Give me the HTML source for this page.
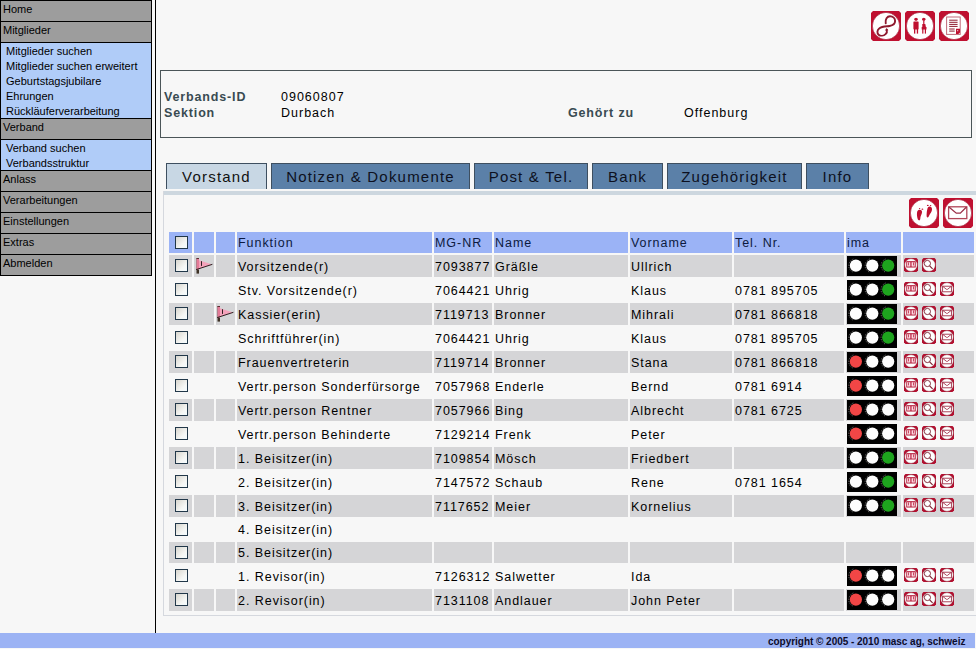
<!DOCTYPE html>
<html><head><meta charset="utf-8"><style>
html,body{margin:0;padding:0}
body{width:976px;height:649px;overflow:hidden;position:relative;background:#f7f7f7;font-family:"Liberation Sans", sans-serif;}
.abs{position:absolute}
.menu{position:absolute;left:0;top:0;width:152px;height:276px;background:#000}
.mg{position:absolute;left:1px;width:150px;height:20px;background:#9d9d9d;font-size:11px;color:#000;}
.mg span{position:absolute;left:2px;top:2px;}
.msub{position:absolute;left:1px;width:150px;background:#b0ccf8;padding-top:1px;box-sizing:border-box}
.ms{height:15px;line-height:15px;font-size:11px;padding-left:5px;color:#000;white-space:nowrap}
.mb{position:absolute;left:0;width:150px;height:1px;background:#000}
.vline{position:absolute;left:155px;top:0;width:1px;height:633px;background:#000}
.info{position:absolute;left:160px;top:70px;width:810px;height:66px;border:1px solid #4b5558;}
.lab{position:absolute;font-weight:bold;color:#394b52;font-size:12.5px;letter-spacing:0.85px}
.val{position:absolute;color:#000;font-size:12.5px;letter-spacing:1.0px}
.tab{position:absolute;top:163px;height:25px;border:1px solid #3e4f60;border-bottom:none;background:#5b80a8;color:#0d1020;font-size:15px;line-height:26px;text-align:center;letter-spacing:1.2px;white-space:nowrap}
.tab.act{background:#c8d7e4;color:#111}
.band{position:absolute;left:163px;top:191px;width:813px;height:4px;background:#cdd7df}
.pleft{position:absolute;left:163px;top:191px;width:1px;height:425px;background:#d5d8de}
.pbot{position:absolute;left:163px;top:615px;width:813px;height:1px;background:#d5d8de}
.c{position:absolute;overflow:hidden}
.t{position:absolute;left:1px;top:5px;font-size:12.5px;letter-spacing:0.95px;color:#000;white-space:nowrap}
.t.th{top:4px;color:#0c1a40}
.footer{position:absolute;left:0;top:633px;width:975px;height:15px;background:#9cb3f4}
.footer span{position:absolute;left:768px;top:3px;font-size:10px;font-weight:bold;color:#0c0c2c;letter-spacing:-0.03px;white-space:nowrap}
</style></head><body>
<div class="menu">
<div class="mg" style="top:1px"><span>Home</span></div>
<div class="mb" style="top:21px"></div>
<div class="mg" style="top:22px"><span>Mitglieder</span></div>
<div class="mb" style="top:42px"></div>
<div class="msub" style="top:43px;height:75px"><div class="ms">Mitglieder suchen</div><div class="ms">Mitglieder suchen erweitert</div><div class="ms">Geburtstagsjubilare</div><div class="ms">Ehrungen</div><div class="ms">Rückläuferverarbeitung</div></div>
<div class="mb" style="top:118px"></div>
<div class="mg" style="top:119px"><span>Verband</span></div>
<div class="mb" style="top:139px"></div>
<div class="msub" style="top:140px;height:30px"><div class="ms">Verband suchen</div><div class="ms">Verbandsstruktur</div></div>
<div class="mb" style="top:170px"></div>
<div class="mg" style="top:171px"><span>Anlass</span></div>
<div class="mb" style="top:191px"></div>
<div class="mg" style="top:192px"><span>Verarbeitungen</span></div>
<div class="mb" style="top:212px"></div>
<div class="mg" style="top:213px"><span>Einstellungen</span></div>
<div class="mb" style="top:233px"></div>
<div class="mg" style="top:234px"><span>Extras</span></div>
<div class="mb" style="top:254px"></div>
<div class="mg" style="top:255px"><span>Abmelden</span></div>
<div class="mb" style="top:275px"></div>
</div>
<div class="vline"></div>
<div class="abs" style="left:871px;top:11px"><svg width="30" height="30" viewBox="0 0 30 30" style="display:block"><path d="M2 0H28L30 2V28L28 30H2L0 28V2Z" fill="#bf1030"/><circle cx="15" cy="15" r="13.6" fill="#fff" stroke="#a01830" stroke-width="0.6"/><path d="M14.7 12.3C14 8.2 16.2 5.3 19 5.3C22 5.3 24.1 7.6 24.1 10.1C24.1 13.3 21.2 14.6 18.6 15C15 15.5 11 15.4 8.2 17.4C6 19 5.9 22.3 7.6 23.7C9.5 25.2 12.6 24.9 14.6 23.1C15.9 21.9 16.2 20.5 15.8 18.9" fill="none" stroke="#8e1a2e" stroke-width="1.9" stroke-linecap="round"/><path d="M13.9 19.6L15.6 16.9L17.4 19.3Z" fill="#8e1a2e"/></svg></div>
<div class="abs" style="left:905px;top:11px"><svg width="30" height="30" viewBox="0 0 30 30" style="display:block"><path d="M2 0H28L30 2V28L28 30H2L0 28V2Z" fill="#bf1030"/><circle cx="15" cy="15" r="13.6" fill="#fff" stroke="#a01830" stroke-width="0.6"/><g fill="#bf1030"><path d="M9.3 7.6h3.4l-.5 1.6h-2.4z"/><circle cx="11" cy="8.2" r="1.5"/><rect x="8.4" y="10.4" width="5.2" height="8" rx="0.6"/><rect x="9" y="18" width="1.3" height="4.6"/><rect x="11.8" y="18" width="1.3" height="4.6"/><path d="M17.1 7.6h3.4l-.5 1.6h-2.4z"/><circle cx="18.8" cy="8.2" r="1.5"/><rect x="18.2" y="9.5" width="1.2" height="4"/><path d="M17.3 13h3l.6 3h.6v2.4h-4.8v-2.4h.6z"/><rect x="17.2" y="18" width="1.2" height="4.6"/><rect x="19.8" y="18" width="1.2" height="4.6"/></g></svg></div>
<div class="abs" style="left:939px;top:11px"><svg width="30" height="30" viewBox="0 0 30 30" style="display:block"><path d="M2 0H28L30 2V28L28 30H2L0 28V2Z" fill="#bf1030"/><circle cx="15" cy="15" r="13.6" fill="#fff" stroke="#a01830" stroke-width="0.6"/><rect x="7.6" y="6" width="13.6" height="17.4" fill="#fff" stroke="#c06a7a" stroke-width="1"/><g stroke="#8e1a2e" stroke-width="1"><line x1="10.2" y1="9.2" x2="18.6" y2="9.2"/><line x1="10.2" y1="11.3" x2="18.6" y2="11.3"/><line x1="10.2" y1="13.4" x2="18.6" y2="13.4"/><line x1="10.2" y1="15.4" x2="18.6" y2="15.4"/><line x1="10.2" y1="18" x2="15.7" y2="18"/><line x1="10.2" y1="20.1" x2="15.7" y2="20.1"/></g><path d="M17 17.8h4v3.6l-1.6 1.6h-2.4z" fill="#bf1030"/><rect x="18.2" y="19.2" width="1" height="1" fill="#fff"/></svg></div>
<div class="info"></div>
<div class="lab" style="left:164px;top:90px">Verbands-ID</div>
<div class="lab" style="left:164px;top:106px">Sektion</div>
<div class="val" style="left:281px;top:90px">09060807</div>
<div class="val" style="left:281px;top:106px">Durbach</div>
<div class="lab" style="left:568px;top:106px">Gehört zu</div>
<div class="val" style="left:684px;top:106px">Offenburg</div>
<div class="tab act" style="left:166px;width:99px">Vorstand</div><div class="tab" style="left:271px;width:197px">Notizen &amp; Dokumente</div><div class="tab" style="left:474px;width:112px">Post &amp; Tel.</div><div class="tab" style="left:592px;width:69px">Bank</div><div class="tab" style="left:667px;width:133px">Zugehörigkeit</div><div class="tab" style="left:806px;width:61px">Info</div>
<div class="band"></div>
<div class="pleft"></div>
<div class="pbot"></div>
<div class="abs" style="left:909px;top:198px"><svg width="30" height="30" viewBox="0 0 30 30" style="display:block"><path d="M2 0H28L30 2V28L28 30H2L0 28V2Z" fill="#bf1030"/><circle cx="15" cy="15" r="13.6" fill="#fff" stroke="#a01830" stroke-width="0.6"/><g fill="#bf1030"><path d="M10.2 11.8C12 11.4 13.2 12.6 13 14.4C12.8 16.2 11.6 17.6 11.4 19.6C11.3 21 11.2 22.4 10.2 22.4C9 22.4 8.6 21 8.3 19.6C7.9 17.4 7.8 15.6 8.2 13.8C8.5 12.6 9.2 12 10.2 11.8Z"/><path d="M20.6 8.5C22.4 8.6 23.2 10 23 11.8C22.8 13.8 21.2 15.6 20.2 17.4C19.6 18.6 19.3 19.6 18.4 19.4C17.6 19.2 17.6 18 17.6 16.8C17.6 14.8 17.9 12.6 18.4 10.8C18.8 9.4 19.6 8.5 20.6 8.5Z"/><ellipse cx="10.6" cy="10.6" rx=".7" ry=".5"/><ellipse cx="13.4" cy="11.2" rx=".9" ry=".6"/><ellipse cx="18.8" cy="7.4" rx=".9" ry=".6"/><ellipse cx="21.6" cy="7.6" rx=".7" ry=".5"/></g></svg></div>
<div class="abs" style="left:943px;top:198px"><svg width="30" height="30" viewBox="0 0 30 30" style="display:block"><path d="M2 0H28L30 2V28L28 30H2L0 28V2Z" fill="#bf1030"/><circle cx="15" cy="15" r="13.6" fill="#fff" stroke="#a01830" stroke-width="0.6"/><rect x="5.6" y="8.8" width="18.2" height="11.8" fill="#fff" stroke="#b04558" stroke-width="1.3"/><path d="M5.9 9L13.3 15.2H17.3L23.5 9" fill="none" stroke="#9a3048" stroke-width="1.3"/></svg></div>
<div class="c" style="left:169px;top:232px;width:23px;height:21px;background:#9bb3f6;"><div style="position:absolute;left:6px;top:4px"><svg width="13" height="13" viewBox="0 0 13 13" style="display:block"><defs><linearGradient id="cg" x1="0" y1="0" x2="1" y2="1"><stop offset="0" stop-color="#d6d4cc"/><stop offset="0.65" stop-color="#f6f7f5"/><stop offset="1" stop-color="#f2fcff"/></linearGradient></defs><rect x="0.5" y="0.5" width="12" height="12" fill="url(#cg)" stroke="#22384a" stroke-width="1"/></svg></div></div>
<div class="c" style="left:194px;top:232px;width:20px;height:21px;background:#9bb3f6;"></div>
<div class="c" style="left:216px;top:232px;width:19px;height:21px;background:#9bb3f6;"></div>
<div class="c" style="left:237px;top:232px;width:195px;height:21px;background:#9bb3f6;"><span class="t th">Funktion</span></div>
<div class="c" style="left:434px;top:232px;width:58px;height:21px;background:#9bb3f6;"><span class="t th">MG-NR</span></div>
<div class="c" style="left:494px;top:232px;width:134px;height:21px;background:#9bb3f6;"><span class="t th">Name</span></div>
<div class="c" style="left:630px;top:232px;width:102px;height:21px;background:#9bb3f6;"><span class="t th">Vorname</span></div>
<div class="c" style="left:734px;top:232px;width:110px;height:21px;background:#9bb3f6;"><span class="t th">Tel. Nr.</span></div>
<div class="c" style="left:846px;top:232px;width:55px;height:21px;background:#9bb3f6;"><span class="t th">ima</span></div>
<div class="c" style="left:903px;top:232px;width:71px;height:21px;background:#9bb3f6;"></div>
<div class="c" style="left:169px;top:255px;width:23px;height:22px;background:#d5d5d7;"><div style="position:absolute;left:6px;top:4px"><svg width="13" height="13" viewBox="0 0 13 13" style="display:block"><defs><linearGradient id="cg" x1="0" y1="0" x2="1" y2="1"><stop offset="0" stop-color="#d6d4cc"/><stop offset="0.65" stop-color="#f6f7f5"/><stop offset="1" stop-color="#f2fcff"/></linearGradient></defs><rect x="0.5" y="0.5" width="12" height="12" fill="url(#cg)" stroke="#22384a" stroke-width="1"/></svg></div></div>
<div class="c" style="left:194px;top:255px;width:20px;height:22px;background:#d5d5d7;"><div style="position:absolute;left:1px;top:3px"><svg width="18" height="17" viewBox="0 0 18 17" style="display:block"><rect x="1.5" y="0" width="2.5" height="15.6" fill="#3e3226"/><rect x="1.5" y="0.8" width="2.5" height="10.6" fill="#e47a98"/><path d="M4 2.2 L17.2 6.4 L1.5 11.4 L4 11.4 Z" fill="#f4a2ba"/><path d="M1.2 11.6 L17.4 6.3" stroke="#1a1010" stroke-width="0.9"/><rect x="6.1" y="3.2" width="0.9" height="4.7" fill="#1a1010"/><rect x="1.5" y="0" width="2.5" height="0.8" fill="#5a2a30"/></svg></div></div>
<div class="c" style="left:216px;top:255px;width:19px;height:22px;background:#d5d5d7;"></div>
<div class="c" style="left:237px;top:255px;width:195px;height:22px;background:#d5d5d7;"><span class="t">Vorsitzende(r)</span></div>
<div class="c" style="left:434px;top:255px;width:58px;height:22px;background:#d5d5d7;"><span class="t">7093877</span></div>
<div class="c" style="left:494px;top:255px;width:134px;height:22px;background:#d5d5d7;"><span class="t">Gräßle</span></div>
<div class="c" style="left:630px;top:255px;width:102px;height:22px;background:#d5d5d7;"><span class="t">Ullrich</span></div>
<div class="c" style="left:734px;top:255px;width:110px;height:22px;background:#d5d5d7;"></div>
<div class="c" style="left:846px;top:255px;width:55px;height:22px;background:#d5d5d7;"><div style="position:absolute;left:1px;top:1px"><svg width="50" height="20" viewBox="0 0 50 20" style="display:block"><rect width="50" height="20" fill="#000"/><circle cx="8.9" cy="9.6" r="6.1" fill="#fdfdfd"/><path d="M6.4 3.0 A7 7 0 0 0 6.4 16.2" fill="none" stroke="#9a9a9a" stroke-width="0.7" stroke-dasharray="1.2 1.3"/><circle cx="25.3" cy="9.6" r="6.1" fill="#fdfdfd"/><path d="M22.8 3.0 A7 7 0 0 0 22.8 16.2" fill="none" stroke="#9a9a9a" stroke-width="0.7" stroke-dasharray="1.2 1.3"/><circle cx="41.2" cy="9.6" r="6.1" fill="#1ea41e"/><path d="M38.7 3.0 A7 7 0 0 0 38.7 16.2" fill="none" stroke="#9a9a9a" stroke-width="0.7" stroke-dasharray="1.2 1.3"/></svg></div></div>
<div class="c" style="left:903px;top:255px;width:71px;height:22px;background:#d5d5d7;"><div style="position:absolute;left:1px;top:3px"><svg width="14" height="14" viewBox="0 0 14 14" style="display:block"><path d="M1.5 0H12.5L14 1.5V12.5L12.5 14H1.5L0 12.5V1.5Z" fill="#b21030"/><circle cx="7" cy="7" r="6.4" fill="#fff" stroke="#801828" stroke-width="0.5"/><rect x="2.3" y="3.2" width="9.4" height="6.3" fill="#b21030"/><g fill="#fbd8e0"><rect x="3.1" y="4.2" width="3.3" height="4.4"/><rect x="7.5" y="4.2" width="3.3" height="4.4"/></g><g fill="#b21030"><rect x="4.2" y="4.4" width=".7" height="3"/><rect x="9" y="4.4" width=".7" height="3"/></g></svg></div><div style="position:absolute;left:19px;top:3px"><svg width="14" height="14" viewBox="0 0 14 14" style="display:block"><path d="M1.5 0H12.5L14 1.5V12.5L12.5 14H1.5L0 12.5V1.5Z" fill="#b21030"/><circle cx="7" cy="7" r="6.4" fill="#fff" stroke="#801828" stroke-width="0.5"/><circle cx="5.4" cy="5.5" r="3.1" fill="none" stroke="#7a2030" stroke-width="0.9"/><line x1="7.6" y1="7.8" x2="10.6" y2="10.8" stroke="#7a2030" stroke-width="1.1"/></svg></div></div>
<div class="c" style="left:169px;top:279px;width:23px;height:22px;background:transparent;"><div style="position:absolute;left:6px;top:4px"><svg width="13" height="13" viewBox="0 0 13 13" style="display:block"><defs><linearGradient id="cg" x1="0" y1="0" x2="1" y2="1"><stop offset="0" stop-color="#d6d4cc"/><stop offset="0.65" stop-color="#f6f7f5"/><stop offset="1" stop-color="#f2fcff"/></linearGradient></defs><rect x="0.5" y="0.5" width="12" height="12" fill="url(#cg)" stroke="#22384a" stroke-width="1"/></svg></div></div>
<div class="c" style="left:194px;top:279px;width:20px;height:22px;background:transparent;"></div>
<div class="c" style="left:216px;top:279px;width:19px;height:22px;background:transparent;"></div>
<div class="c" style="left:237px;top:279px;width:195px;height:22px;background:transparent;"><span class="t">Stv. Vorsitzende(r)</span></div>
<div class="c" style="left:434px;top:279px;width:58px;height:22px;background:transparent;"><span class="t">7064421</span></div>
<div class="c" style="left:494px;top:279px;width:134px;height:22px;background:transparent;"><span class="t">Uhrig</span></div>
<div class="c" style="left:630px;top:279px;width:102px;height:22px;background:transparent;"><span class="t">Klaus</span></div>
<div class="c" style="left:734px;top:279px;width:110px;height:22px;background:transparent;"><span class="t">0781 895705</span></div>
<div class="c" style="left:846px;top:279px;width:55px;height:22px;background:transparent;"><div style="position:absolute;left:1px;top:1px"><svg width="50" height="20" viewBox="0 0 50 20" style="display:block"><rect width="50" height="20" fill="#000"/><circle cx="8.9" cy="9.6" r="6.1" fill="#fdfdfd"/><path d="M6.4 3.0 A7 7 0 0 0 6.4 16.2" fill="none" stroke="#9a9a9a" stroke-width="0.7" stroke-dasharray="1.2 1.3"/><circle cx="25.3" cy="9.6" r="6.1" fill="#fdfdfd"/><path d="M22.8 3.0 A7 7 0 0 0 22.8 16.2" fill="none" stroke="#9a9a9a" stroke-width="0.7" stroke-dasharray="1.2 1.3"/><circle cx="41.2" cy="9.6" r="6.1" fill="#1ea41e"/><path d="M38.7 3.0 A7 7 0 0 0 38.7 16.2" fill="none" stroke="#9a9a9a" stroke-width="0.7" stroke-dasharray="1.2 1.3"/></svg></div></div>
<div class="c" style="left:903px;top:279px;width:71px;height:22px;background:transparent;"><div style="position:absolute;left:1px;top:3px"><svg width="14" height="14" viewBox="0 0 14 14" style="display:block"><path d="M1.5 0H12.5L14 1.5V12.5L12.5 14H1.5L0 12.5V1.5Z" fill="#b21030"/><circle cx="7" cy="7" r="6.4" fill="#fff" stroke="#801828" stroke-width="0.5"/><rect x="2.3" y="3.2" width="9.4" height="6.3" fill="#b21030"/><g fill="#fbd8e0"><rect x="3.1" y="4.2" width="3.3" height="4.4"/><rect x="7.5" y="4.2" width="3.3" height="4.4"/></g><g fill="#b21030"><rect x="4.2" y="4.4" width=".7" height="3"/><rect x="9" y="4.4" width=".7" height="3"/></g></svg></div><div style="position:absolute;left:19px;top:3px"><svg width="14" height="14" viewBox="0 0 14 14" style="display:block"><path d="M1.5 0H12.5L14 1.5V12.5L12.5 14H1.5L0 12.5V1.5Z" fill="#b21030"/><circle cx="7" cy="7" r="6.4" fill="#fff" stroke="#801828" stroke-width="0.5"/><circle cx="5.4" cy="5.5" r="3.1" fill="none" stroke="#7a2030" stroke-width="0.9"/><line x1="7.6" y1="7.8" x2="10.6" y2="10.8" stroke="#7a2030" stroke-width="1.1"/></svg></div><div style="position:absolute;left:37px;top:3px"><svg width="14" height="14" viewBox="0 0 14 14" style="display:block"><path d="M1.5 0H12.5L14 1.5V12.5L12.5 14H1.5L0 12.5V1.5Z" fill="#b21030"/><circle cx="7" cy="7" r="6.4" fill="#fff" stroke="#801828" stroke-width="0.5"/><rect x="2.6" y="4.2" width="8.8" height="5.6" fill="none" stroke="#a03048" stroke-width=".9"/><path d="M2.8 4.4l3.6 2.9h1.2l3.6-2.9" fill="none" stroke="#a03048" stroke-width=".9"/></svg></div></div>
<div class="c" style="left:169px;top:303px;width:23px;height:22px;background:#d5d5d7;"><div style="position:absolute;left:6px;top:4px"><svg width="13" height="13" viewBox="0 0 13 13" style="display:block"><defs><linearGradient id="cg" x1="0" y1="0" x2="1" y2="1"><stop offset="0" stop-color="#d6d4cc"/><stop offset="0.65" stop-color="#f6f7f5"/><stop offset="1" stop-color="#f2fcff"/></linearGradient></defs><rect x="0.5" y="0.5" width="12" height="12" fill="url(#cg)" stroke="#22384a" stroke-width="1"/></svg></div></div>
<div class="c" style="left:194px;top:303px;width:20px;height:22px;background:#d5d5d7;"></div>
<div class="c" style="left:216px;top:303px;width:19px;height:22px;background:#d5d5d7;"><div style="position:absolute;left:0px;top:3px"><svg width="18" height="17" viewBox="0 0 18 17" style="display:block"><rect x="1.5" y="0" width="2.5" height="15.6" fill="#3e3226"/><rect x="1.5" y="0.8" width="2.5" height="10.6" fill="#e47a98"/><path d="M4 2.2 L17.2 6.4 L1.5 11.4 L4 11.4 Z" fill="#f4a2ba"/><path d="M1.2 11.6 L17.4 6.3" stroke="#1a1010" stroke-width="0.9"/><rect x="6.1" y="3.2" width="0.9" height="4.7" fill="#1a1010"/><rect x="1.5" y="0" width="2.5" height="0.8" fill="#5a2a30"/></svg></div></div>
<div class="c" style="left:237px;top:303px;width:195px;height:22px;background:#d5d5d7;"><span class="t">Kassier(erin)</span></div>
<div class="c" style="left:434px;top:303px;width:58px;height:22px;background:#d5d5d7;"><span class="t">7119713</span></div>
<div class="c" style="left:494px;top:303px;width:134px;height:22px;background:#d5d5d7;"><span class="t">Bronner</span></div>
<div class="c" style="left:630px;top:303px;width:102px;height:22px;background:#d5d5d7;"><span class="t">Mihrali</span></div>
<div class="c" style="left:734px;top:303px;width:110px;height:22px;background:#d5d5d7;"><span class="t">0781 866818</span></div>
<div class="c" style="left:846px;top:303px;width:55px;height:22px;background:#d5d5d7;"><div style="position:absolute;left:1px;top:1px"><svg width="50" height="20" viewBox="0 0 50 20" style="display:block"><rect width="50" height="20" fill="#000"/><circle cx="8.9" cy="9.6" r="6.1" fill="#fdfdfd"/><path d="M6.4 3.0 A7 7 0 0 0 6.4 16.2" fill="none" stroke="#9a9a9a" stroke-width="0.7" stroke-dasharray="1.2 1.3"/><circle cx="25.3" cy="9.6" r="6.1" fill="#fdfdfd"/><path d="M22.8 3.0 A7 7 0 0 0 22.8 16.2" fill="none" stroke="#9a9a9a" stroke-width="0.7" stroke-dasharray="1.2 1.3"/><circle cx="41.2" cy="9.6" r="6.1" fill="#1ea41e"/><path d="M38.7 3.0 A7 7 0 0 0 38.7 16.2" fill="none" stroke="#9a9a9a" stroke-width="0.7" stroke-dasharray="1.2 1.3"/></svg></div></div>
<div class="c" style="left:903px;top:303px;width:71px;height:22px;background:#d5d5d7;"><div style="position:absolute;left:1px;top:3px"><svg width="14" height="14" viewBox="0 0 14 14" style="display:block"><path d="M1.5 0H12.5L14 1.5V12.5L12.5 14H1.5L0 12.5V1.5Z" fill="#b21030"/><circle cx="7" cy="7" r="6.4" fill="#fff" stroke="#801828" stroke-width="0.5"/><rect x="2.3" y="3.2" width="9.4" height="6.3" fill="#b21030"/><g fill="#fbd8e0"><rect x="3.1" y="4.2" width="3.3" height="4.4"/><rect x="7.5" y="4.2" width="3.3" height="4.4"/></g><g fill="#b21030"><rect x="4.2" y="4.4" width=".7" height="3"/><rect x="9" y="4.4" width=".7" height="3"/></g></svg></div><div style="position:absolute;left:19px;top:3px"><svg width="14" height="14" viewBox="0 0 14 14" style="display:block"><path d="M1.5 0H12.5L14 1.5V12.5L12.5 14H1.5L0 12.5V1.5Z" fill="#b21030"/><circle cx="7" cy="7" r="6.4" fill="#fff" stroke="#801828" stroke-width="0.5"/><circle cx="5.4" cy="5.5" r="3.1" fill="none" stroke="#7a2030" stroke-width="0.9"/><line x1="7.6" y1="7.8" x2="10.6" y2="10.8" stroke="#7a2030" stroke-width="1.1"/></svg></div><div style="position:absolute;left:37px;top:3px"><svg width="14" height="14" viewBox="0 0 14 14" style="display:block"><path d="M1.5 0H12.5L14 1.5V12.5L12.5 14H1.5L0 12.5V1.5Z" fill="#b21030"/><circle cx="7" cy="7" r="6.4" fill="#fff" stroke="#801828" stroke-width="0.5"/><rect x="2.6" y="4.2" width="8.8" height="5.6" fill="none" stroke="#a03048" stroke-width=".9"/><path d="M2.8 4.4l3.6 2.9h1.2l3.6-2.9" fill="none" stroke="#a03048" stroke-width=".9"/></svg></div></div>
<div class="c" style="left:169px;top:327px;width:23px;height:22px;background:transparent;"><div style="position:absolute;left:6px;top:4px"><svg width="13" height="13" viewBox="0 0 13 13" style="display:block"><defs><linearGradient id="cg" x1="0" y1="0" x2="1" y2="1"><stop offset="0" stop-color="#d6d4cc"/><stop offset="0.65" stop-color="#f6f7f5"/><stop offset="1" stop-color="#f2fcff"/></linearGradient></defs><rect x="0.5" y="0.5" width="12" height="12" fill="url(#cg)" stroke="#22384a" stroke-width="1"/></svg></div></div>
<div class="c" style="left:194px;top:327px;width:20px;height:22px;background:transparent;"></div>
<div class="c" style="left:216px;top:327px;width:19px;height:22px;background:transparent;"></div>
<div class="c" style="left:237px;top:327px;width:195px;height:22px;background:transparent;"><span class="t">Schriftführer(in)</span></div>
<div class="c" style="left:434px;top:327px;width:58px;height:22px;background:transparent;"><span class="t">7064421</span></div>
<div class="c" style="left:494px;top:327px;width:134px;height:22px;background:transparent;"><span class="t">Uhrig</span></div>
<div class="c" style="left:630px;top:327px;width:102px;height:22px;background:transparent;"><span class="t">Klaus</span></div>
<div class="c" style="left:734px;top:327px;width:110px;height:22px;background:transparent;"><span class="t">0781 895705</span></div>
<div class="c" style="left:846px;top:327px;width:55px;height:22px;background:transparent;"><div style="position:absolute;left:1px;top:1px"><svg width="50" height="20" viewBox="0 0 50 20" style="display:block"><rect width="50" height="20" fill="#000"/><circle cx="8.9" cy="9.6" r="6.1" fill="#fdfdfd"/><path d="M6.4 3.0 A7 7 0 0 0 6.4 16.2" fill="none" stroke="#9a9a9a" stroke-width="0.7" stroke-dasharray="1.2 1.3"/><circle cx="25.3" cy="9.6" r="6.1" fill="#fdfdfd"/><path d="M22.8 3.0 A7 7 0 0 0 22.8 16.2" fill="none" stroke="#9a9a9a" stroke-width="0.7" stroke-dasharray="1.2 1.3"/><circle cx="41.2" cy="9.6" r="6.1" fill="#1ea41e"/><path d="M38.7 3.0 A7 7 0 0 0 38.7 16.2" fill="none" stroke="#9a9a9a" stroke-width="0.7" stroke-dasharray="1.2 1.3"/></svg></div></div>
<div class="c" style="left:903px;top:327px;width:71px;height:22px;background:transparent;"><div style="position:absolute;left:1px;top:3px"><svg width="14" height="14" viewBox="0 0 14 14" style="display:block"><path d="M1.5 0H12.5L14 1.5V12.5L12.5 14H1.5L0 12.5V1.5Z" fill="#b21030"/><circle cx="7" cy="7" r="6.4" fill="#fff" stroke="#801828" stroke-width="0.5"/><rect x="2.3" y="3.2" width="9.4" height="6.3" fill="#b21030"/><g fill="#fbd8e0"><rect x="3.1" y="4.2" width="3.3" height="4.4"/><rect x="7.5" y="4.2" width="3.3" height="4.4"/></g><g fill="#b21030"><rect x="4.2" y="4.4" width=".7" height="3"/><rect x="9" y="4.4" width=".7" height="3"/></g></svg></div><div style="position:absolute;left:19px;top:3px"><svg width="14" height="14" viewBox="0 0 14 14" style="display:block"><path d="M1.5 0H12.5L14 1.5V12.5L12.5 14H1.5L0 12.5V1.5Z" fill="#b21030"/><circle cx="7" cy="7" r="6.4" fill="#fff" stroke="#801828" stroke-width="0.5"/><circle cx="5.4" cy="5.5" r="3.1" fill="none" stroke="#7a2030" stroke-width="0.9"/><line x1="7.6" y1="7.8" x2="10.6" y2="10.8" stroke="#7a2030" stroke-width="1.1"/></svg></div><div style="position:absolute;left:37px;top:3px"><svg width="14" height="14" viewBox="0 0 14 14" style="display:block"><path d="M1.5 0H12.5L14 1.5V12.5L12.5 14H1.5L0 12.5V1.5Z" fill="#b21030"/><circle cx="7" cy="7" r="6.4" fill="#fff" stroke="#801828" stroke-width="0.5"/><rect x="2.6" y="4.2" width="8.8" height="5.6" fill="none" stroke="#a03048" stroke-width=".9"/><path d="M2.8 4.4l3.6 2.9h1.2l3.6-2.9" fill="none" stroke="#a03048" stroke-width=".9"/></svg></div></div>
<div class="c" style="left:169px;top:351px;width:23px;height:22px;background:#d5d5d7;"><div style="position:absolute;left:6px;top:4px"><svg width="13" height="13" viewBox="0 0 13 13" style="display:block"><defs><linearGradient id="cg" x1="0" y1="0" x2="1" y2="1"><stop offset="0" stop-color="#d6d4cc"/><stop offset="0.65" stop-color="#f6f7f5"/><stop offset="1" stop-color="#f2fcff"/></linearGradient></defs><rect x="0.5" y="0.5" width="12" height="12" fill="url(#cg)" stroke="#22384a" stroke-width="1"/></svg></div></div>
<div class="c" style="left:194px;top:351px;width:20px;height:22px;background:#d5d5d7;"></div>
<div class="c" style="left:216px;top:351px;width:19px;height:22px;background:#d5d5d7;"></div>
<div class="c" style="left:237px;top:351px;width:195px;height:22px;background:#d5d5d7;"><span class="t">Frauenvertreterin</span></div>
<div class="c" style="left:434px;top:351px;width:58px;height:22px;background:#d5d5d7;"><span class="t">7119714</span></div>
<div class="c" style="left:494px;top:351px;width:134px;height:22px;background:#d5d5d7;"><span class="t">Bronner</span></div>
<div class="c" style="left:630px;top:351px;width:102px;height:22px;background:#d5d5d7;"><span class="t">Stana</span></div>
<div class="c" style="left:734px;top:351px;width:110px;height:22px;background:#d5d5d7;"><span class="t">0781 866818</span></div>
<div class="c" style="left:846px;top:351px;width:55px;height:22px;background:#d5d5d7;"><div style="position:absolute;left:1px;top:1px"><svg width="50" height="20" viewBox="0 0 50 20" style="display:block"><rect width="50" height="20" fill="#000"/><circle cx="8.9" cy="9.6" r="6.1" fill="#f24646"/><path d="M6.4 3.0 A7 7 0 0 0 6.4 16.2" fill="none" stroke="#9a9a9a" stroke-width="0.7" stroke-dasharray="1.2 1.3"/><circle cx="25.3" cy="9.6" r="6.1" fill="#fdfdfd"/><path d="M22.8 3.0 A7 7 0 0 0 22.8 16.2" fill="none" stroke="#9a9a9a" stroke-width="0.7" stroke-dasharray="1.2 1.3"/><circle cx="41.2" cy="9.6" r="6.1" fill="#fdfdfd"/><path d="M38.7 3.0 A7 7 0 0 0 38.7 16.2" fill="none" stroke="#9a9a9a" stroke-width="0.7" stroke-dasharray="1.2 1.3"/></svg></div></div>
<div class="c" style="left:903px;top:351px;width:71px;height:22px;background:#d5d5d7;"><div style="position:absolute;left:1px;top:3px"><svg width="14" height="14" viewBox="0 0 14 14" style="display:block"><path d="M1.5 0H12.5L14 1.5V12.5L12.5 14H1.5L0 12.5V1.5Z" fill="#b21030"/><circle cx="7" cy="7" r="6.4" fill="#fff" stroke="#801828" stroke-width="0.5"/><rect x="2.3" y="3.2" width="9.4" height="6.3" fill="#b21030"/><g fill="#fbd8e0"><rect x="3.1" y="4.2" width="3.3" height="4.4"/><rect x="7.5" y="4.2" width="3.3" height="4.4"/></g><g fill="#b21030"><rect x="4.2" y="4.4" width=".7" height="3"/><rect x="9" y="4.4" width=".7" height="3"/></g></svg></div><div style="position:absolute;left:19px;top:3px"><svg width="14" height="14" viewBox="0 0 14 14" style="display:block"><path d="M1.5 0H12.5L14 1.5V12.5L12.5 14H1.5L0 12.5V1.5Z" fill="#b21030"/><circle cx="7" cy="7" r="6.4" fill="#fff" stroke="#801828" stroke-width="0.5"/><circle cx="5.4" cy="5.5" r="3.1" fill="none" stroke="#7a2030" stroke-width="0.9"/><line x1="7.6" y1="7.8" x2="10.6" y2="10.8" stroke="#7a2030" stroke-width="1.1"/></svg></div><div style="position:absolute;left:37px;top:3px"><svg width="14" height="14" viewBox="0 0 14 14" style="display:block"><path d="M1.5 0H12.5L14 1.5V12.5L12.5 14H1.5L0 12.5V1.5Z" fill="#b21030"/><circle cx="7" cy="7" r="6.4" fill="#fff" stroke="#801828" stroke-width="0.5"/><rect x="2.6" y="4.2" width="8.8" height="5.6" fill="none" stroke="#a03048" stroke-width=".9"/><path d="M2.8 4.4l3.6 2.9h1.2l3.6-2.9" fill="none" stroke="#a03048" stroke-width=".9"/></svg></div></div>
<div class="c" style="left:169px;top:375px;width:23px;height:22px;background:transparent;"><div style="position:absolute;left:6px;top:4px"><svg width="13" height="13" viewBox="0 0 13 13" style="display:block"><defs><linearGradient id="cg" x1="0" y1="0" x2="1" y2="1"><stop offset="0" stop-color="#d6d4cc"/><stop offset="0.65" stop-color="#f6f7f5"/><stop offset="1" stop-color="#f2fcff"/></linearGradient></defs><rect x="0.5" y="0.5" width="12" height="12" fill="url(#cg)" stroke="#22384a" stroke-width="1"/></svg></div></div>
<div class="c" style="left:194px;top:375px;width:20px;height:22px;background:transparent;"></div>
<div class="c" style="left:216px;top:375px;width:19px;height:22px;background:transparent;"></div>
<div class="c" style="left:237px;top:375px;width:195px;height:22px;background:transparent;"><span class="t">Vertr.person Sonderfürsorge</span></div>
<div class="c" style="left:434px;top:375px;width:58px;height:22px;background:transparent;"><span class="t">7057968</span></div>
<div class="c" style="left:494px;top:375px;width:134px;height:22px;background:transparent;"><span class="t">Enderle</span></div>
<div class="c" style="left:630px;top:375px;width:102px;height:22px;background:transparent;"><span class="t">Bernd</span></div>
<div class="c" style="left:734px;top:375px;width:110px;height:22px;background:transparent;"><span class="t">0781 6914</span></div>
<div class="c" style="left:846px;top:375px;width:55px;height:22px;background:transparent;"><div style="position:absolute;left:1px;top:1px"><svg width="50" height="20" viewBox="0 0 50 20" style="display:block"><rect width="50" height="20" fill="#000"/><circle cx="8.9" cy="9.6" r="6.1" fill="#f24646"/><path d="M6.4 3.0 A7 7 0 0 0 6.4 16.2" fill="none" stroke="#9a9a9a" stroke-width="0.7" stroke-dasharray="1.2 1.3"/><circle cx="25.3" cy="9.6" r="6.1" fill="#fdfdfd"/><path d="M22.8 3.0 A7 7 0 0 0 22.8 16.2" fill="none" stroke="#9a9a9a" stroke-width="0.7" stroke-dasharray="1.2 1.3"/><circle cx="41.2" cy="9.6" r="6.1" fill="#fdfdfd"/><path d="M38.7 3.0 A7 7 0 0 0 38.7 16.2" fill="none" stroke="#9a9a9a" stroke-width="0.7" stroke-dasharray="1.2 1.3"/></svg></div></div>
<div class="c" style="left:903px;top:375px;width:71px;height:22px;background:transparent;"><div style="position:absolute;left:1px;top:3px"><svg width="14" height="14" viewBox="0 0 14 14" style="display:block"><path d="M1.5 0H12.5L14 1.5V12.5L12.5 14H1.5L0 12.5V1.5Z" fill="#b21030"/><circle cx="7" cy="7" r="6.4" fill="#fff" stroke="#801828" stroke-width="0.5"/><rect x="2.3" y="3.2" width="9.4" height="6.3" fill="#b21030"/><g fill="#fbd8e0"><rect x="3.1" y="4.2" width="3.3" height="4.4"/><rect x="7.5" y="4.2" width="3.3" height="4.4"/></g><g fill="#b21030"><rect x="4.2" y="4.4" width=".7" height="3"/><rect x="9" y="4.4" width=".7" height="3"/></g></svg></div><div style="position:absolute;left:19px;top:3px"><svg width="14" height="14" viewBox="0 0 14 14" style="display:block"><path d="M1.5 0H12.5L14 1.5V12.5L12.5 14H1.5L0 12.5V1.5Z" fill="#b21030"/><circle cx="7" cy="7" r="6.4" fill="#fff" stroke="#801828" stroke-width="0.5"/><circle cx="5.4" cy="5.5" r="3.1" fill="none" stroke="#7a2030" stroke-width="0.9"/><line x1="7.6" y1="7.8" x2="10.6" y2="10.8" stroke="#7a2030" stroke-width="1.1"/></svg></div><div style="position:absolute;left:37px;top:3px"><svg width="14" height="14" viewBox="0 0 14 14" style="display:block"><path d="M1.5 0H12.5L14 1.5V12.5L12.5 14H1.5L0 12.5V1.5Z" fill="#b21030"/><circle cx="7" cy="7" r="6.4" fill="#fff" stroke="#801828" stroke-width="0.5"/><rect x="2.6" y="4.2" width="8.8" height="5.6" fill="none" stroke="#a03048" stroke-width=".9"/><path d="M2.8 4.4l3.6 2.9h1.2l3.6-2.9" fill="none" stroke="#a03048" stroke-width=".9"/></svg></div></div>
<div class="c" style="left:169px;top:399px;width:23px;height:22px;background:#d5d5d7;"><div style="position:absolute;left:6px;top:4px"><svg width="13" height="13" viewBox="0 0 13 13" style="display:block"><defs><linearGradient id="cg" x1="0" y1="0" x2="1" y2="1"><stop offset="0" stop-color="#d6d4cc"/><stop offset="0.65" stop-color="#f6f7f5"/><stop offset="1" stop-color="#f2fcff"/></linearGradient></defs><rect x="0.5" y="0.5" width="12" height="12" fill="url(#cg)" stroke="#22384a" stroke-width="1"/></svg></div></div>
<div class="c" style="left:194px;top:399px;width:20px;height:22px;background:#d5d5d7;"></div>
<div class="c" style="left:216px;top:399px;width:19px;height:22px;background:#d5d5d7;"></div>
<div class="c" style="left:237px;top:399px;width:195px;height:22px;background:#d5d5d7;"><span class="t">Vertr.person Rentner</span></div>
<div class="c" style="left:434px;top:399px;width:58px;height:22px;background:#d5d5d7;"><span class="t">7057966</span></div>
<div class="c" style="left:494px;top:399px;width:134px;height:22px;background:#d5d5d7;"><span class="t">Bing</span></div>
<div class="c" style="left:630px;top:399px;width:102px;height:22px;background:#d5d5d7;"><span class="t">Albrecht</span></div>
<div class="c" style="left:734px;top:399px;width:110px;height:22px;background:#d5d5d7;"><span class="t">0781 6725</span></div>
<div class="c" style="left:846px;top:399px;width:55px;height:22px;background:#d5d5d7;"><div style="position:absolute;left:1px;top:1px"><svg width="50" height="20" viewBox="0 0 50 20" style="display:block"><rect width="50" height="20" fill="#000"/><circle cx="8.9" cy="9.6" r="6.1" fill="#f24646"/><path d="M6.4 3.0 A7 7 0 0 0 6.4 16.2" fill="none" stroke="#9a9a9a" stroke-width="0.7" stroke-dasharray="1.2 1.3"/><circle cx="25.3" cy="9.6" r="6.1" fill="#fdfdfd"/><path d="M22.8 3.0 A7 7 0 0 0 22.8 16.2" fill="none" stroke="#9a9a9a" stroke-width="0.7" stroke-dasharray="1.2 1.3"/><circle cx="41.2" cy="9.6" r="6.1" fill="#fdfdfd"/><path d="M38.7 3.0 A7 7 0 0 0 38.7 16.2" fill="none" stroke="#9a9a9a" stroke-width="0.7" stroke-dasharray="1.2 1.3"/></svg></div></div>
<div class="c" style="left:903px;top:399px;width:71px;height:22px;background:#d5d5d7;"><div style="position:absolute;left:1px;top:3px"><svg width="14" height="14" viewBox="0 0 14 14" style="display:block"><path d="M1.5 0H12.5L14 1.5V12.5L12.5 14H1.5L0 12.5V1.5Z" fill="#b21030"/><circle cx="7" cy="7" r="6.4" fill="#fff" stroke="#801828" stroke-width="0.5"/><rect x="2.3" y="3.2" width="9.4" height="6.3" fill="#b21030"/><g fill="#fbd8e0"><rect x="3.1" y="4.2" width="3.3" height="4.4"/><rect x="7.5" y="4.2" width="3.3" height="4.4"/></g><g fill="#b21030"><rect x="4.2" y="4.4" width=".7" height="3"/><rect x="9" y="4.4" width=".7" height="3"/></g></svg></div><div style="position:absolute;left:19px;top:3px"><svg width="14" height="14" viewBox="0 0 14 14" style="display:block"><path d="M1.5 0H12.5L14 1.5V12.5L12.5 14H1.5L0 12.5V1.5Z" fill="#b21030"/><circle cx="7" cy="7" r="6.4" fill="#fff" stroke="#801828" stroke-width="0.5"/><circle cx="5.4" cy="5.5" r="3.1" fill="none" stroke="#7a2030" stroke-width="0.9"/><line x1="7.6" y1="7.8" x2="10.6" y2="10.8" stroke="#7a2030" stroke-width="1.1"/></svg></div><div style="position:absolute;left:37px;top:3px"><svg width="14" height="14" viewBox="0 0 14 14" style="display:block"><path d="M1.5 0H12.5L14 1.5V12.5L12.5 14H1.5L0 12.5V1.5Z" fill="#b21030"/><circle cx="7" cy="7" r="6.4" fill="#fff" stroke="#801828" stroke-width="0.5"/><rect x="2.6" y="4.2" width="8.8" height="5.6" fill="none" stroke="#a03048" stroke-width=".9"/><path d="M2.8 4.4l3.6 2.9h1.2l3.6-2.9" fill="none" stroke="#a03048" stroke-width=".9"/></svg></div></div>
<div class="c" style="left:169px;top:423px;width:23px;height:22px;background:transparent;"><div style="position:absolute;left:6px;top:4px"><svg width="13" height="13" viewBox="0 0 13 13" style="display:block"><defs><linearGradient id="cg" x1="0" y1="0" x2="1" y2="1"><stop offset="0" stop-color="#d6d4cc"/><stop offset="0.65" stop-color="#f6f7f5"/><stop offset="1" stop-color="#f2fcff"/></linearGradient></defs><rect x="0.5" y="0.5" width="12" height="12" fill="url(#cg)" stroke="#22384a" stroke-width="1"/></svg></div></div>
<div class="c" style="left:194px;top:423px;width:20px;height:22px;background:transparent;"></div>
<div class="c" style="left:216px;top:423px;width:19px;height:22px;background:transparent;"></div>
<div class="c" style="left:237px;top:423px;width:195px;height:22px;background:transparent;"><span class="t">Vertr.person Behinderte</span></div>
<div class="c" style="left:434px;top:423px;width:58px;height:22px;background:transparent;"><span class="t">7129214</span></div>
<div class="c" style="left:494px;top:423px;width:134px;height:22px;background:transparent;"><span class="t">Frenk</span></div>
<div class="c" style="left:630px;top:423px;width:102px;height:22px;background:transparent;"><span class="t">Peter</span></div>
<div class="c" style="left:734px;top:423px;width:110px;height:22px;background:transparent;"></div>
<div class="c" style="left:846px;top:423px;width:55px;height:22px;background:transparent;"><div style="position:absolute;left:1px;top:1px"><svg width="50" height="20" viewBox="0 0 50 20" style="display:block"><rect width="50" height="20" fill="#000"/><circle cx="8.9" cy="9.6" r="6.1" fill="#f24646"/><path d="M6.4 3.0 A7 7 0 0 0 6.4 16.2" fill="none" stroke="#9a9a9a" stroke-width="0.7" stroke-dasharray="1.2 1.3"/><circle cx="25.3" cy="9.6" r="6.1" fill="#fdfdfd"/><path d="M22.8 3.0 A7 7 0 0 0 22.8 16.2" fill="none" stroke="#9a9a9a" stroke-width="0.7" stroke-dasharray="1.2 1.3"/><circle cx="41.2" cy="9.6" r="6.1" fill="#fdfdfd"/><path d="M38.7 3.0 A7 7 0 0 0 38.7 16.2" fill="none" stroke="#9a9a9a" stroke-width="0.7" stroke-dasharray="1.2 1.3"/></svg></div></div>
<div class="c" style="left:903px;top:423px;width:71px;height:22px;background:transparent;"><div style="position:absolute;left:1px;top:3px"><svg width="14" height="14" viewBox="0 0 14 14" style="display:block"><path d="M1.5 0H12.5L14 1.5V12.5L12.5 14H1.5L0 12.5V1.5Z" fill="#b21030"/><circle cx="7" cy="7" r="6.4" fill="#fff" stroke="#801828" stroke-width="0.5"/><rect x="2.3" y="3.2" width="9.4" height="6.3" fill="#b21030"/><g fill="#fbd8e0"><rect x="3.1" y="4.2" width="3.3" height="4.4"/><rect x="7.5" y="4.2" width="3.3" height="4.4"/></g><g fill="#b21030"><rect x="4.2" y="4.4" width=".7" height="3"/><rect x="9" y="4.4" width=".7" height="3"/></g></svg></div><div style="position:absolute;left:19px;top:3px"><svg width="14" height="14" viewBox="0 0 14 14" style="display:block"><path d="M1.5 0H12.5L14 1.5V12.5L12.5 14H1.5L0 12.5V1.5Z" fill="#b21030"/><circle cx="7" cy="7" r="6.4" fill="#fff" stroke="#801828" stroke-width="0.5"/><circle cx="5.4" cy="5.5" r="3.1" fill="none" stroke="#7a2030" stroke-width="0.9"/><line x1="7.6" y1="7.8" x2="10.6" y2="10.8" stroke="#7a2030" stroke-width="1.1"/></svg></div><div style="position:absolute;left:37px;top:3px"><svg width="14" height="14" viewBox="0 0 14 14" style="display:block"><path d="M1.5 0H12.5L14 1.5V12.5L12.5 14H1.5L0 12.5V1.5Z" fill="#b21030"/><circle cx="7" cy="7" r="6.4" fill="#fff" stroke="#801828" stroke-width="0.5"/><rect x="2.6" y="4.2" width="8.8" height="5.6" fill="none" stroke="#a03048" stroke-width=".9"/><path d="M2.8 4.4l3.6 2.9h1.2l3.6-2.9" fill="none" stroke="#a03048" stroke-width=".9"/></svg></div></div>
<div class="c" style="left:169px;top:447px;width:23px;height:22px;background:#d5d5d7;"><div style="position:absolute;left:6px;top:4px"><svg width="13" height="13" viewBox="0 0 13 13" style="display:block"><defs><linearGradient id="cg" x1="0" y1="0" x2="1" y2="1"><stop offset="0" stop-color="#d6d4cc"/><stop offset="0.65" stop-color="#f6f7f5"/><stop offset="1" stop-color="#f2fcff"/></linearGradient></defs><rect x="0.5" y="0.5" width="12" height="12" fill="url(#cg)" stroke="#22384a" stroke-width="1"/></svg></div></div>
<div class="c" style="left:194px;top:447px;width:20px;height:22px;background:#d5d5d7;"></div>
<div class="c" style="left:216px;top:447px;width:19px;height:22px;background:#d5d5d7;"></div>
<div class="c" style="left:237px;top:447px;width:195px;height:22px;background:#d5d5d7;"><span class="t">1. Beisitzer(in)</span></div>
<div class="c" style="left:434px;top:447px;width:58px;height:22px;background:#d5d5d7;"><span class="t">7109854</span></div>
<div class="c" style="left:494px;top:447px;width:134px;height:22px;background:#d5d5d7;"><span class="t">Mösch</span></div>
<div class="c" style="left:630px;top:447px;width:102px;height:22px;background:#d5d5d7;"><span class="t">Friedbert</span></div>
<div class="c" style="left:734px;top:447px;width:110px;height:22px;background:#d5d5d7;"></div>
<div class="c" style="left:846px;top:447px;width:55px;height:22px;background:#d5d5d7;"><div style="position:absolute;left:1px;top:1px"><svg width="50" height="20" viewBox="0 0 50 20" style="display:block"><rect width="50" height="20" fill="#000"/><circle cx="8.9" cy="9.6" r="6.1" fill="#fdfdfd"/><path d="M6.4 3.0 A7 7 0 0 0 6.4 16.2" fill="none" stroke="#9a9a9a" stroke-width="0.7" stroke-dasharray="1.2 1.3"/><circle cx="25.3" cy="9.6" r="6.1" fill="#fdfdfd"/><path d="M22.8 3.0 A7 7 0 0 0 22.8 16.2" fill="none" stroke="#9a9a9a" stroke-width="0.7" stroke-dasharray="1.2 1.3"/><circle cx="41.2" cy="9.6" r="6.1" fill="#1ea41e"/><path d="M38.7 3.0 A7 7 0 0 0 38.7 16.2" fill="none" stroke="#9a9a9a" stroke-width="0.7" stroke-dasharray="1.2 1.3"/></svg></div></div>
<div class="c" style="left:903px;top:447px;width:71px;height:22px;background:#d5d5d7;"><div style="position:absolute;left:1px;top:3px"><svg width="14" height="14" viewBox="0 0 14 14" style="display:block"><path d="M1.5 0H12.5L14 1.5V12.5L12.5 14H1.5L0 12.5V1.5Z" fill="#b21030"/><circle cx="7" cy="7" r="6.4" fill="#fff" stroke="#801828" stroke-width="0.5"/><rect x="2.3" y="3.2" width="9.4" height="6.3" fill="#b21030"/><g fill="#fbd8e0"><rect x="3.1" y="4.2" width="3.3" height="4.4"/><rect x="7.5" y="4.2" width="3.3" height="4.4"/></g><g fill="#b21030"><rect x="4.2" y="4.4" width=".7" height="3"/><rect x="9" y="4.4" width=".7" height="3"/></g></svg></div><div style="position:absolute;left:19px;top:3px"><svg width="14" height="14" viewBox="0 0 14 14" style="display:block"><path d="M1.5 0H12.5L14 1.5V12.5L12.5 14H1.5L0 12.5V1.5Z" fill="#b21030"/><circle cx="7" cy="7" r="6.4" fill="#fff" stroke="#801828" stroke-width="0.5"/><circle cx="5.4" cy="5.5" r="3.1" fill="none" stroke="#7a2030" stroke-width="0.9"/><line x1="7.6" y1="7.8" x2="10.6" y2="10.8" stroke="#7a2030" stroke-width="1.1"/></svg></div></div>
<div class="c" style="left:169px;top:471px;width:23px;height:22px;background:transparent;"><div style="position:absolute;left:6px;top:4px"><svg width="13" height="13" viewBox="0 0 13 13" style="display:block"><defs><linearGradient id="cg" x1="0" y1="0" x2="1" y2="1"><stop offset="0" stop-color="#d6d4cc"/><stop offset="0.65" stop-color="#f6f7f5"/><stop offset="1" stop-color="#f2fcff"/></linearGradient></defs><rect x="0.5" y="0.5" width="12" height="12" fill="url(#cg)" stroke="#22384a" stroke-width="1"/></svg></div></div>
<div class="c" style="left:194px;top:471px;width:20px;height:22px;background:transparent;"></div>
<div class="c" style="left:216px;top:471px;width:19px;height:22px;background:transparent;"></div>
<div class="c" style="left:237px;top:471px;width:195px;height:22px;background:transparent;"><span class="t">2. Beisitzer(in)</span></div>
<div class="c" style="left:434px;top:471px;width:58px;height:22px;background:transparent;"><span class="t">7147572</span></div>
<div class="c" style="left:494px;top:471px;width:134px;height:22px;background:transparent;"><span class="t">Schaub</span></div>
<div class="c" style="left:630px;top:471px;width:102px;height:22px;background:transparent;"><span class="t">Rene</span></div>
<div class="c" style="left:734px;top:471px;width:110px;height:22px;background:transparent;"><span class="t">0781 1654</span></div>
<div class="c" style="left:846px;top:471px;width:55px;height:22px;background:transparent;"><div style="position:absolute;left:1px;top:1px"><svg width="50" height="20" viewBox="0 0 50 20" style="display:block"><rect width="50" height="20" fill="#000"/><circle cx="8.9" cy="9.6" r="6.1" fill="#fdfdfd"/><path d="M6.4 3.0 A7 7 0 0 0 6.4 16.2" fill="none" stroke="#9a9a9a" stroke-width="0.7" stroke-dasharray="1.2 1.3"/><circle cx="25.3" cy="9.6" r="6.1" fill="#fdfdfd"/><path d="M22.8 3.0 A7 7 0 0 0 22.8 16.2" fill="none" stroke="#9a9a9a" stroke-width="0.7" stroke-dasharray="1.2 1.3"/><circle cx="41.2" cy="9.6" r="6.1" fill="#1ea41e"/><path d="M38.7 3.0 A7 7 0 0 0 38.7 16.2" fill="none" stroke="#9a9a9a" stroke-width="0.7" stroke-dasharray="1.2 1.3"/></svg></div></div>
<div class="c" style="left:903px;top:471px;width:71px;height:22px;background:transparent;"><div style="position:absolute;left:1px;top:3px"><svg width="14" height="14" viewBox="0 0 14 14" style="display:block"><path d="M1.5 0H12.5L14 1.5V12.5L12.5 14H1.5L0 12.5V1.5Z" fill="#b21030"/><circle cx="7" cy="7" r="6.4" fill="#fff" stroke="#801828" stroke-width="0.5"/><rect x="2.3" y="3.2" width="9.4" height="6.3" fill="#b21030"/><g fill="#fbd8e0"><rect x="3.1" y="4.2" width="3.3" height="4.4"/><rect x="7.5" y="4.2" width="3.3" height="4.4"/></g><g fill="#b21030"><rect x="4.2" y="4.4" width=".7" height="3"/><rect x="9" y="4.4" width=".7" height="3"/></g></svg></div><div style="position:absolute;left:19px;top:3px"><svg width="14" height="14" viewBox="0 0 14 14" style="display:block"><path d="M1.5 0H12.5L14 1.5V12.5L12.5 14H1.5L0 12.5V1.5Z" fill="#b21030"/><circle cx="7" cy="7" r="6.4" fill="#fff" stroke="#801828" stroke-width="0.5"/><circle cx="5.4" cy="5.5" r="3.1" fill="none" stroke="#7a2030" stroke-width="0.9"/><line x1="7.6" y1="7.8" x2="10.6" y2="10.8" stroke="#7a2030" stroke-width="1.1"/></svg></div><div style="position:absolute;left:37px;top:3px"><svg width="14" height="14" viewBox="0 0 14 14" style="display:block"><path d="M1.5 0H12.5L14 1.5V12.5L12.5 14H1.5L0 12.5V1.5Z" fill="#b21030"/><circle cx="7" cy="7" r="6.4" fill="#fff" stroke="#801828" stroke-width="0.5"/><rect x="2.6" y="4.2" width="8.8" height="5.6" fill="none" stroke="#a03048" stroke-width=".9"/><path d="M2.8 4.4l3.6 2.9h1.2l3.6-2.9" fill="none" stroke="#a03048" stroke-width=".9"/></svg></div></div>
<div class="c" style="left:169px;top:495px;width:23px;height:22px;background:#d5d5d7;"><div style="position:absolute;left:6px;top:4px"><svg width="13" height="13" viewBox="0 0 13 13" style="display:block"><defs><linearGradient id="cg" x1="0" y1="0" x2="1" y2="1"><stop offset="0" stop-color="#d6d4cc"/><stop offset="0.65" stop-color="#f6f7f5"/><stop offset="1" stop-color="#f2fcff"/></linearGradient></defs><rect x="0.5" y="0.5" width="12" height="12" fill="url(#cg)" stroke="#22384a" stroke-width="1"/></svg></div></div>
<div class="c" style="left:194px;top:495px;width:20px;height:22px;background:#d5d5d7;"></div>
<div class="c" style="left:216px;top:495px;width:19px;height:22px;background:#d5d5d7;"></div>
<div class="c" style="left:237px;top:495px;width:195px;height:22px;background:#d5d5d7;"><span class="t">3. Beisitzer(in)</span></div>
<div class="c" style="left:434px;top:495px;width:58px;height:22px;background:#d5d5d7;"><span class="t">7117652</span></div>
<div class="c" style="left:494px;top:495px;width:134px;height:22px;background:#d5d5d7;"><span class="t">Meier</span></div>
<div class="c" style="left:630px;top:495px;width:102px;height:22px;background:#d5d5d7;"><span class="t">Kornelius</span></div>
<div class="c" style="left:734px;top:495px;width:110px;height:22px;background:#d5d5d7;"></div>
<div class="c" style="left:846px;top:495px;width:55px;height:22px;background:#d5d5d7;"><div style="position:absolute;left:1px;top:1px"><svg width="50" height="20" viewBox="0 0 50 20" style="display:block"><rect width="50" height="20" fill="#000"/><circle cx="8.9" cy="9.6" r="6.1" fill="#fdfdfd"/><path d="M6.4 3.0 A7 7 0 0 0 6.4 16.2" fill="none" stroke="#9a9a9a" stroke-width="0.7" stroke-dasharray="1.2 1.3"/><circle cx="25.3" cy="9.6" r="6.1" fill="#fdfdfd"/><path d="M22.8 3.0 A7 7 0 0 0 22.8 16.2" fill="none" stroke="#9a9a9a" stroke-width="0.7" stroke-dasharray="1.2 1.3"/><circle cx="41.2" cy="9.6" r="6.1" fill="#1ea41e"/><path d="M38.7 3.0 A7 7 0 0 0 38.7 16.2" fill="none" stroke="#9a9a9a" stroke-width="0.7" stroke-dasharray="1.2 1.3"/></svg></div></div>
<div class="c" style="left:903px;top:495px;width:71px;height:22px;background:#d5d5d7;"><div style="position:absolute;left:1px;top:3px"><svg width="14" height="14" viewBox="0 0 14 14" style="display:block"><path d="M1.5 0H12.5L14 1.5V12.5L12.5 14H1.5L0 12.5V1.5Z" fill="#b21030"/><circle cx="7" cy="7" r="6.4" fill="#fff" stroke="#801828" stroke-width="0.5"/><rect x="2.3" y="3.2" width="9.4" height="6.3" fill="#b21030"/><g fill="#fbd8e0"><rect x="3.1" y="4.2" width="3.3" height="4.4"/><rect x="7.5" y="4.2" width="3.3" height="4.4"/></g><g fill="#b21030"><rect x="4.2" y="4.4" width=".7" height="3"/><rect x="9" y="4.4" width=".7" height="3"/></g></svg></div><div style="position:absolute;left:19px;top:3px"><svg width="14" height="14" viewBox="0 0 14 14" style="display:block"><path d="M1.5 0H12.5L14 1.5V12.5L12.5 14H1.5L0 12.5V1.5Z" fill="#b21030"/><circle cx="7" cy="7" r="6.4" fill="#fff" stroke="#801828" stroke-width="0.5"/><circle cx="5.4" cy="5.5" r="3.1" fill="none" stroke="#7a2030" stroke-width="0.9"/><line x1="7.6" y1="7.8" x2="10.6" y2="10.8" stroke="#7a2030" stroke-width="1.1"/></svg></div><div style="position:absolute;left:37px;top:3px"><svg width="14" height="14" viewBox="0 0 14 14" style="display:block"><path d="M1.5 0H12.5L14 1.5V12.5L12.5 14H1.5L0 12.5V1.5Z" fill="#b21030"/><circle cx="7" cy="7" r="6.4" fill="#fff" stroke="#801828" stroke-width="0.5"/><rect x="2.6" y="4.2" width="8.8" height="5.6" fill="none" stroke="#a03048" stroke-width=".9"/><path d="M2.8 4.4l3.6 2.9h1.2l3.6-2.9" fill="none" stroke="#a03048" stroke-width=".9"/></svg></div></div>
<div class="c" style="left:169px;top:519px;width:23px;height:21px;background:transparent;"><div style="position:absolute;left:6px;top:4px"><svg width="13" height="13" viewBox="0 0 13 13" style="display:block"><defs><linearGradient id="cg" x1="0" y1="0" x2="1" y2="1"><stop offset="0" stop-color="#d6d4cc"/><stop offset="0.65" stop-color="#f6f7f5"/><stop offset="1" stop-color="#f2fcff"/></linearGradient></defs><rect x="0.5" y="0.5" width="12" height="12" fill="url(#cg)" stroke="#22384a" stroke-width="1"/></svg></div></div>
<div class="c" style="left:194px;top:519px;width:20px;height:21px;background:transparent;"></div>
<div class="c" style="left:216px;top:519px;width:19px;height:21px;background:transparent;"></div>
<div class="c" style="left:237px;top:519px;width:195px;height:21px;background:transparent;"><span class="t" style="top:4px">4. Beisitzer(in)</span></div>
<div class="c" style="left:434px;top:519px;width:58px;height:21px;background:transparent;"></div>
<div class="c" style="left:494px;top:519px;width:134px;height:21px;background:transparent;"></div>
<div class="c" style="left:630px;top:519px;width:102px;height:21px;background:transparent;"></div>
<div class="c" style="left:734px;top:519px;width:110px;height:21px;background:transparent;"></div>
<div class="c" style="left:846px;top:519px;width:55px;height:21px;background:transparent;"></div>
<div class="c" style="left:903px;top:519px;width:71px;height:21px;background:transparent;"></div>
<div class="c" style="left:169px;top:542px;width:23px;height:21px;background:#d5d5d7;"><div style="position:absolute;left:6px;top:4px"><svg width="13" height="13" viewBox="0 0 13 13" style="display:block"><defs><linearGradient id="cg" x1="0" y1="0" x2="1" y2="1"><stop offset="0" stop-color="#d6d4cc"/><stop offset="0.65" stop-color="#f6f7f5"/><stop offset="1" stop-color="#f2fcff"/></linearGradient></defs><rect x="0.5" y="0.5" width="12" height="12" fill="url(#cg)" stroke="#22384a" stroke-width="1"/></svg></div></div>
<div class="c" style="left:194px;top:542px;width:20px;height:21px;background:#d5d5d7;"></div>
<div class="c" style="left:216px;top:542px;width:19px;height:21px;background:#d5d5d7;"></div>
<div class="c" style="left:237px;top:542px;width:195px;height:21px;background:#d5d5d7;"><span class="t" style="top:4px">5. Beisitzer(in)</span></div>
<div class="c" style="left:434px;top:542px;width:58px;height:21px;background:#d5d5d7;"></div>
<div class="c" style="left:494px;top:542px;width:134px;height:21px;background:#d5d5d7;"></div>
<div class="c" style="left:630px;top:542px;width:102px;height:21px;background:#d5d5d7;"></div>
<div class="c" style="left:734px;top:542px;width:110px;height:21px;background:#d5d5d7;"></div>
<div class="c" style="left:846px;top:542px;width:55px;height:21px;background:#d5d5d7;"></div>
<div class="c" style="left:903px;top:542px;width:71px;height:21px;background:#d5d5d7;"></div>
<div class="c" style="left:169px;top:565px;width:23px;height:22px;background:transparent;"><div style="position:absolute;left:6px;top:4px"><svg width="13" height="13" viewBox="0 0 13 13" style="display:block"><defs><linearGradient id="cg" x1="0" y1="0" x2="1" y2="1"><stop offset="0" stop-color="#d6d4cc"/><stop offset="0.65" stop-color="#f6f7f5"/><stop offset="1" stop-color="#f2fcff"/></linearGradient></defs><rect x="0.5" y="0.5" width="12" height="12" fill="url(#cg)" stroke="#22384a" stroke-width="1"/></svg></div></div>
<div class="c" style="left:194px;top:565px;width:20px;height:22px;background:transparent;"></div>
<div class="c" style="left:216px;top:565px;width:19px;height:22px;background:transparent;"></div>
<div class="c" style="left:237px;top:565px;width:195px;height:22px;background:transparent;"><span class="t">1. Revisor(in)</span></div>
<div class="c" style="left:434px;top:565px;width:58px;height:22px;background:transparent;"><span class="t">7126312</span></div>
<div class="c" style="left:494px;top:565px;width:134px;height:22px;background:transparent;"><span class="t">Salwetter</span></div>
<div class="c" style="left:630px;top:565px;width:102px;height:22px;background:transparent;"><span class="t">Ida</span></div>
<div class="c" style="left:734px;top:565px;width:110px;height:22px;background:transparent;"></div>
<div class="c" style="left:846px;top:565px;width:55px;height:22px;background:transparent;"><div style="position:absolute;left:1px;top:1px"><svg width="50" height="20" viewBox="0 0 50 20" style="display:block"><rect width="50" height="20" fill="#000"/><circle cx="8.9" cy="9.6" r="6.1" fill="#f24646"/><path d="M6.4 3.0 A7 7 0 0 0 6.4 16.2" fill="none" stroke="#9a9a9a" stroke-width="0.7" stroke-dasharray="1.2 1.3"/><circle cx="25.3" cy="9.6" r="6.1" fill="#fdfdfd"/><path d="M22.8 3.0 A7 7 0 0 0 22.8 16.2" fill="none" stroke="#9a9a9a" stroke-width="0.7" stroke-dasharray="1.2 1.3"/><circle cx="41.2" cy="9.6" r="6.1" fill="#fdfdfd"/><path d="M38.7 3.0 A7 7 0 0 0 38.7 16.2" fill="none" stroke="#9a9a9a" stroke-width="0.7" stroke-dasharray="1.2 1.3"/></svg></div></div>
<div class="c" style="left:903px;top:565px;width:71px;height:22px;background:transparent;"><div style="position:absolute;left:1px;top:3px"><svg width="14" height="14" viewBox="0 0 14 14" style="display:block"><path d="M1.5 0H12.5L14 1.5V12.5L12.5 14H1.5L0 12.5V1.5Z" fill="#b21030"/><circle cx="7" cy="7" r="6.4" fill="#fff" stroke="#801828" stroke-width="0.5"/><rect x="2.3" y="3.2" width="9.4" height="6.3" fill="#b21030"/><g fill="#fbd8e0"><rect x="3.1" y="4.2" width="3.3" height="4.4"/><rect x="7.5" y="4.2" width="3.3" height="4.4"/></g><g fill="#b21030"><rect x="4.2" y="4.4" width=".7" height="3"/><rect x="9" y="4.4" width=".7" height="3"/></g></svg></div><div style="position:absolute;left:19px;top:3px"><svg width="14" height="14" viewBox="0 0 14 14" style="display:block"><path d="M1.5 0H12.5L14 1.5V12.5L12.5 14H1.5L0 12.5V1.5Z" fill="#b21030"/><circle cx="7" cy="7" r="6.4" fill="#fff" stroke="#801828" stroke-width="0.5"/><circle cx="5.4" cy="5.5" r="3.1" fill="none" stroke="#7a2030" stroke-width="0.9"/><line x1="7.6" y1="7.8" x2="10.6" y2="10.8" stroke="#7a2030" stroke-width="1.1"/></svg></div><div style="position:absolute;left:37px;top:3px"><svg width="14" height="14" viewBox="0 0 14 14" style="display:block"><path d="M1.5 0H12.5L14 1.5V12.5L12.5 14H1.5L0 12.5V1.5Z" fill="#b21030"/><circle cx="7" cy="7" r="6.4" fill="#fff" stroke="#801828" stroke-width="0.5"/><rect x="2.6" y="4.2" width="8.8" height="5.6" fill="none" stroke="#a03048" stroke-width=".9"/><path d="M2.8 4.4l3.6 2.9h1.2l3.6-2.9" fill="none" stroke="#a03048" stroke-width=".9"/></svg></div></div>
<div class="c" style="left:169px;top:589px;width:23px;height:22px;background:#d5d5d7;"><div style="position:absolute;left:6px;top:4px"><svg width="13" height="13" viewBox="0 0 13 13" style="display:block"><defs><linearGradient id="cg" x1="0" y1="0" x2="1" y2="1"><stop offset="0" stop-color="#d6d4cc"/><stop offset="0.65" stop-color="#f6f7f5"/><stop offset="1" stop-color="#f2fcff"/></linearGradient></defs><rect x="0.5" y="0.5" width="12" height="12" fill="url(#cg)" stroke="#22384a" stroke-width="1"/></svg></div></div>
<div class="c" style="left:194px;top:589px;width:20px;height:22px;background:#d5d5d7;"></div>
<div class="c" style="left:216px;top:589px;width:19px;height:22px;background:#d5d5d7;"></div>
<div class="c" style="left:237px;top:589px;width:195px;height:22px;background:#d5d5d7;"><span class="t">2. Revisor(in)</span></div>
<div class="c" style="left:434px;top:589px;width:58px;height:22px;background:#d5d5d7;"><span class="t">7131108</span></div>
<div class="c" style="left:494px;top:589px;width:134px;height:22px;background:#d5d5d7;"><span class="t">Andlauer</span></div>
<div class="c" style="left:630px;top:589px;width:102px;height:22px;background:#d5d5d7;"><span class="t">John Peter</span></div>
<div class="c" style="left:734px;top:589px;width:110px;height:22px;background:#d5d5d7;"></div>
<div class="c" style="left:846px;top:589px;width:55px;height:22px;background:#d5d5d7;"><div style="position:absolute;left:1px;top:1px"><svg width="50" height="20" viewBox="0 0 50 20" style="display:block"><rect width="50" height="20" fill="#000"/><circle cx="8.9" cy="9.6" r="6.1" fill="#f24646"/><path d="M6.4 3.0 A7 7 0 0 0 6.4 16.2" fill="none" stroke="#9a9a9a" stroke-width="0.7" stroke-dasharray="1.2 1.3"/><circle cx="25.3" cy="9.6" r="6.1" fill="#fdfdfd"/><path d="M22.8 3.0 A7 7 0 0 0 22.8 16.2" fill="none" stroke="#9a9a9a" stroke-width="0.7" stroke-dasharray="1.2 1.3"/><circle cx="41.2" cy="9.6" r="6.1" fill="#fdfdfd"/><path d="M38.7 3.0 A7 7 0 0 0 38.7 16.2" fill="none" stroke="#9a9a9a" stroke-width="0.7" stroke-dasharray="1.2 1.3"/></svg></div></div>
<div class="c" style="left:903px;top:589px;width:71px;height:22px;background:#d5d5d7;"><div style="position:absolute;left:1px;top:3px"><svg width="14" height="14" viewBox="0 0 14 14" style="display:block"><path d="M1.5 0H12.5L14 1.5V12.5L12.5 14H1.5L0 12.5V1.5Z" fill="#b21030"/><circle cx="7" cy="7" r="6.4" fill="#fff" stroke="#801828" stroke-width="0.5"/><rect x="2.3" y="3.2" width="9.4" height="6.3" fill="#b21030"/><g fill="#fbd8e0"><rect x="3.1" y="4.2" width="3.3" height="4.4"/><rect x="7.5" y="4.2" width="3.3" height="4.4"/></g><g fill="#b21030"><rect x="4.2" y="4.4" width=".7" height="3"/><rect x="9" y="4.4" width=".7" height="3"/></g></svg></div><div style="position:absolute;left:19px;top:3px"><svg width="14" height="14" viewBox="0 0 14 14" style="display:block"><path d="M1.5 0H12.5L14 1.5V12.5L12.5 14H1.5L0 12.5V1.5Z" fill="#b21030"/><circle cx="7" cy="7" r="6.4" fill="#fff" stroke="#801828" stroke-width="0.5"/><circle cx="5.4" cy="5.5" r="3.1" fill="none" stroke="#7a2030" stroke-width="0.9"/><line x1="7.6" y1="7.8" x2="10.6" y2="10.8" stroke="#7a2030" stroke-width="1.1"/></svg></div><div style="position:absolute;left:37px;top:3px"><svg width="14" height="14" viewBox="0 0 14 14" style="display:block"><path d="M1.5 0H12.5L14 1.5V12.5L12.5 14H1.5L0 12.5V1.5Z" fill="#b21030"/><circle cx="7" cy="7" r="6.4" fill="#fff" stroke="#801828" stroke-width="0.5"/><rect x="2.6" y="4.2" width="8.8" height="5.6" fill="none" stroke="#a03048" stroke-width=".9"/><path d="M2.8 4.4l3.6 2.9h1.2l3.6-2.9" fill="none" stroke="#a03048" stroke-width=".9"/></svg></div></div>
<div class="footer"><span>copyright © 2005 - 2010 masc ag, schweiz</span></div>
</body></html>
